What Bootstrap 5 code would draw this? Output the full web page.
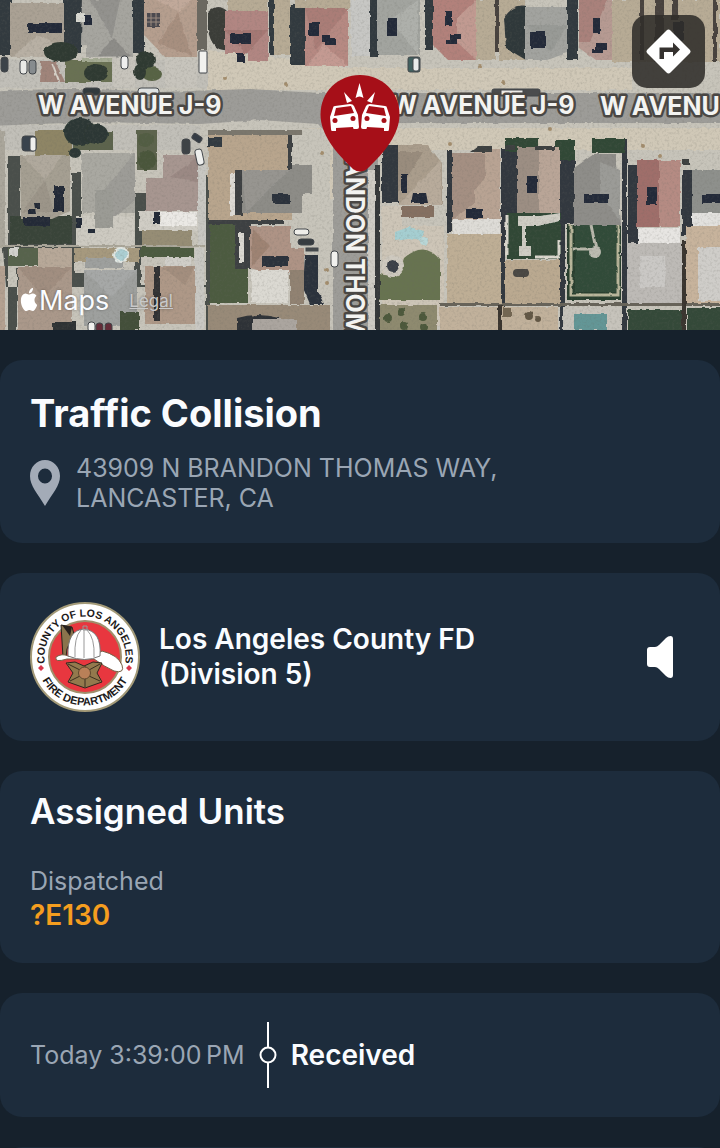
<!DOCTYPE html>
<html lang="en">
<head>
<meta charset="utf-8">
<meta name="viewport" content="width=device-width, initial-scale=1">
<title>Traffic Collision</title>
<link href="https://cdn.jsdelivr.net/npm/bootstrap@5.3.0/dist/css/bootstrap.min.css" rel="stylesheet">
<style>
  body { background: #16212c; color: #fafcff; font-family: Inter, "Liberation Sans", sans-serif; }
  .page { height: 100vh; overflow-x: hidden; overflow-y: auto; scrollbar-width: none; }
  .page::-webkit-scrollbar { display: none; }
  .incident-map { height: 330px; overflow: hidden; background: #bdb8aa; }
  .map-art { width: 100%; height: 100%; display: block; }
  .street { font: 700 25px Inter, sans-serif; fill: #f3f3f1; stroke: #4a4744; stroke-width: 5px; stroke-linejoin: round; paint-order: stroke; }
  .route-btn { top: 15px; right: 15px; width: 73px; height: 73px; border: 0; border-radius: 15px; background: rgba(48, 45, 42, .88); }
  .map-credit { left: 19px; bottom: 13px; gap: 20px; text-shadow: 0 0 3px rgba(0, 0, 0, .4); }
  .brand-name { font-size: 27px; line-height: 32px; }
  .legal-link { font-size: 17px; line-height: 20px; color: #c9c9c9; }
  .stack { display: flex; flex-direction: column; gap: 30px; padding-top: 30px; }
  .panel { background: #1d2c3c; border-radius: 22px; padding: 30px; }
  .title-lg { font-size: 38px; line-height: 47px; font-weight: 700; margin: 0; }
  .title-md { font-size: 35px; line-height: 40px; font-weight: 600; margin: 0; }
  .muted { color: #9aa6b4; font-size: 25px; line-height: 30px; font-weight: 400; }
  .strong-line { font-size: 28px; line-height: 35px; font-weight: 600; margin: 0; }
  .unit-code { color: #f59e1f; }
  .agency { gap: 19px; }
  .seal { width: 110px; height: 110px; margin: -1px 0; }
  .sound-btn { background: none; border: 0; padding: 0; margin-right: 16px; }
  .assigned { padding-top: 20px; }
  .unit-group { display: flex; flex-direction: column; gap: 2px; padding-top: 35px; }
  .timeline { gap: 14px; padding-top: 29px; padding-bottom: 29px; }
</style>
</head>
<body>
<div class="page">
<header class="incident-map position-relative">
  <svg class="map-art" viewBox="0 0 720 330" preserveAspectRatio="xMidYMid slice" role="img" aria-label="Satellite map of the incident">
    <defs>
      <filter id="rough" x="0" y="0" width="100%" height="100%">
        <feTurbulence type="fractalNoise" baseFrequency=".14" numOctaves="2" seed="4" result="n"/>
        <feDisplacementMap in="SourceGraphic" in2="n" scale="3" xChannelSelector="R" yChannelSelector="G" result="d"/>
        <feGaussianBlur in="d" stdDeviation=".6" result="b"/>
        <feColorMatrix in="b" type="saturate" values=".9"/>
      </filter>
      <filter id="grain" x="0" y="0" width="100%" height="100%">
        <feTurbulence type="fractalNoise" baseFrequency=".4" numOctaves="3" seed="9"/>
        <feColorMatrix values="0 0 0 0 .14  0 0 0 0 .14  0 0 0 0 .12  2.4 0 0 0 -1.1"/>
      </filter>
    </defs>
    <g filter="url(#rough)">
      <rect x="-10" y="-10" width="740" height="350" fill="#c7c4b9"/>
      <!-- roads -->
      <path d="M0 60H210V88H0zM0 125H200V150H0z" fill="#c1bfb7"/>
      <path d="M208 50L300 60 350 68H632V90H208zM300 128H720V150H385L330 200V130z" fill="#d1c8b5"/>
      <path d="M-10 92Q60 86 160 92L250 89 320 93H730V123H385L378 135V340H333V140L318 124 260 120 200 124 90 122-10 126z" fill="#9d9c97"/>
      <path d="M368 170h7v170h-7z" fill="#cfccc4"/><path d="M375 165h5v175h-5z" fill="#35373a"/>
      <!-- upper row, yards and shadows -->
      <path d="M-5-5h17v60H-5zM63-5h19v58H63zM133-5h11v58h-11zM370-5h8v62h-8zM425-5h8v55h-8zM567-5h11v65h-11zM290 5h15v60h-15zM269 0h5v55h-5z" fill="#333a40"/>
      <path d="M208 12Q218 2 228 12V50Q212 52 208 30z" fill="#3b3c39"/>
      <path d="M197 0h10v50h-10z" fill="#6c675f"/>
      <path d="M228 0h40v12h-40zM274 0h16v55h-16zM295 0h55v8h-55zM476 0h19v60h-19zM499 0h26v60h-26zM612 0h108v62h-108z" fill="#b8aa92"/>
      <path d="M504 18Q514 3 526 6V60L506 48z" fill="#2f373b"/>
      <path d="M495 0h4v52h-4zM640 0h4v60h-4zM655 0h9v62h-9zM713 0h4v62h-4zM672 0h6v20h-6z" fill="#4a423c"/>
      <path d="M351 0h19v56h-19z" fill="#c7c7c4"/>
      <path d="M10 3h54v54H10z" fill="#aba192"/><path d="M12 57 37 35 64 48V57z" fill="#b9b0a2"/>
      <path d="M82-5h51v62H86V45H81z" fill="#a6a59f"/><path d="M90 0 112 38 120 0z" fill="#93928d"/><path d="M98 56l15-18 18 18z" fill="#8d8c87"/>
      <path d="M144-5h53v62h-32L144 35z" fill="#b79d8b"/><path d="M158 44 178 12 192 56z" fill="#a98e7d"/><path d="M146 -5h50L180 12z" fill="#c3a997"/>
      <path d="M225 11h43v50h-20V53h-23z" fill="#b48580"/><path d="M225 30h43l-22 24z" fill="#a87772"/>
      <path d="M305 8h43v58h-43z" fill="#b98880"/><path d="M305 8h43l-32 42z" fill="#ad7b75"/><path d="M307 66l17-22 24 22z" fill="#c79990"/>
      <path d="M377-5h43v60h-43z" fill="#a2a49f"/><path d="M390 20 418 0v55z" fill="#aeb0aa"/>
      <path d="M433-5h43v65h-28L433 45z" fill="#b68079"/><path d="M457 18 476 0v60l-19-18z" fill="#c4998f"/>
      <path d="M525 7h42v46l-20 7h-22z" fill="#a2a39f"/><path d="M526 25h41l-16 27z" fill="#989a95"/>
      <path d="M579-5h33v65h-16L579 48z" fill="#b89a90"/><path d="M579-5h30L590 42h-11z" fill="#ac8079"/>
      <path d="M28 23h34v10H28zM84 15h8v10h-8zM230 33h21v11h-21zM237 53h8v10h-8zM309 22h10v14h-10zM322 35h8v4h6v6h-10v-3h-4zM387 18h10v18h-10zM445 11h7v15h-7zM446 40h4v-6h11v6h-4v4h-11zM530 32h15v16h-15zM593 18h7v15h-7zM592 49h4v-6h11v7h-4v3h-11zM673 22h11v18h-11z" fill="#23293a"/>
      <path d="M147 13h13v14h-13z" fill="#4c4a50"/>
      <path d="M41 61h14l10 21H40z" fill="#a28378"/><path d="M52 63l7 18" stroke="#d9d2c8" stroke-width="2"/>
      <path d="M65 60h47v22H65z" fill="#69714f"/><path d="M82 58h30v4H82z" fill="#a5ab92"/>
      <path d="M113 57h22v30h-22zM165 58h32v30h-32z" fill="#c7c4bb"/>
      <g fill="#2f3b31"><ellipse cx="61" cy="52" rx="17" ry="10"/><ellipse cx="96" cy="73" rx="12" ry="9"/><ellipse cx="146" cy="60" rx="10" ry="9"/><ellipse cx="152" cy="74" rx="10" ry="7" fill="#56633f"/><ellipse cx="140" cy="72" rx="6" ry="8"/></g>
      <path d="M76 13h9v9h-9z" fill="#d8d8d0"/>
      <!-- lower row, left -->
      <path d="M35 130h37v26H35z" fill="#8f8560"/><path d="M73 132h40v18H73zM137 130h20v40h-20z" fill="#5c6449"/>
      <g fill="#2a3934"><ellipse cx="80" cy="132" rx="16" ry="14"/><ellipse cx="96" cy="134" rx="12" ry="10"/><ellipse cx="75" cy="153" rx="6" ry="5"/><ellipse cx="146" cy="140" rx="8" ry="7" fill="#515d3f"/><ellipse cx="147" cy="160" rx="9" ry="10" fill="#485639"/></g>
      <path d="M-5 150h5v96h8v-90h12v60h52v34H8v80h9v-62h55v-95h9v75h-6v25h60v-80h12v52h-6v40h65v-110h4v200h-4v-88h-200z" fill="#4a4f4b"/>
      <path d="M-5 130h10v115H-5z" fill="#aaa69a"/><path d="M10 216h62v28H10z" fill="#394439"/>
      <path d="M20 155h50v56l-18 8H21z" fill="#a69f91"/><path d="M22 155h40L45 180z" fill="#b1a99b"/><path d="M22 212 45 180 54 212z" fill="#9c9587"/>
      <path d="M82 153h53v60H82z" fill="#a9a8a0"/><path d="M135 153 104 190 98 215 110 222 135 200z" fill="#9d9c96"/><path d="M76 216h58v29H76z" fill="#cdcac0"/><path d="M95 190h18v38h-18z" fill="#9b9b94"/>
      <path d="M163 155h34v25h-34zM146 178h52v34h-52z" fill="#a8958f"/><path d="M170 177 198 157v24z" fill="#9c8883"/>
      <path d="M139 211h60v20h-60z" fill="#d0cdc4"/><path d="M161 212h36v14h-36z" fill="#ebe9e4"/><path d="M142 230h50v16h-50z" fill="#978d72"/>
      <path d="M198 165h8v80h-8z" fill="#c8c7c1"/>
      <path d="M24 217h26v9H24zM54 186h10v26H54zM34 203h6v6h-12v5h8zM76 218h6v10h-6zM88 229h7v4h-7zM153 212h7v12h-7z" fill="#242b38"/>
      <path d="M0 246h205" stroke="#aca799" stroke-width="2"/>
      <path d="M8 248h30v18H8z" fill="#56634a"/><path d="M38 248h34v20H38z" fill="#b8a795"/><path d="M74 248h65v14H74z" fill="#a7997a"/><path d="M140 247h54v10h-54zM210 222h38v81h-38z" fill="#4c5c3c"/>
      <path d="M9 248h9v8H9z" fill="#d2d2cc"/>
      <path d="M-5 266H5v70H-5z" fill="#b5a08f"/>
      <path d="M18 267h54v70H18z" fill="#ac9888"/><path d="M18 267h54L44 298z" fill="#a38e7e"/>
      <path d="M85 258h38v10H85zM84 270h53v56H84z" fill="#9ea09e"/><path d="M84 270h53l-26 28z" fill="#a6a8a7"/>
      <circle cx="121" cy="255" r="8" fill="#e0e6e2"/><circle cx="121" cy="255" r="6" fill="#a9d0d4"/>
      <path d="M145 266h50v58h-50z" fill="#b09884"/><path d="M154 266h6v55h-6z" fill="#333336"/><path d="M165 257h26v9h-26z" fill="#d0cec7"/><path d="M162 267 185 285 195 266z" fill="#a48d7b"/>
      <path d="M195 248h9v82h-9z" fill="#c9c8c3"/><path d="M120 312h19v18h-19z" fill="#425038"/><path d="M52 322h24v12H52z" fill="#2d3334"/>
      <!-- corner lots -->
      <path d="M208 134h84v86h-84z" fill="#b9a48a"/><path d="M288 134h4v40h-4zM235 170h8v45h-8zM208 220h76v4h-76zM235 224h16v45h-16z" fill="#3d4042"/>
      <path d="M208 130h94v5h-94z" fill="#7c776c"/>
      <path d="M208 137h14v10h-14z" fill="#323a42"/>
      <path d="M242 170h50v-5h20v28h-10v20h-60z" fill="#8d8c86"/><path d="M242 170h48l-20 18-24 25z" fill="#979590"/>
      <path d="M230 173h5v42h-5z" fill="#dddad3"/>
      <path d="M250 226h40v22h14v24h-40l-14-4z" fill="#b09382"/><path d="M252 228 270 246 252 266z" fill="#a08271"/>
      <path d="M239 233h5v30h-5zM251 270h37v33h-37z" fill="#dcd9d1"/>
      <path d="M272 194h18v10h-18zM262 256h26v11h-26zM305 255h13v37l6 12h-14l-7-16z" fill="#2c323c"/>
      <path d="M290 270h14v34h-14z" fill="#93826f"/>
      <path d="M208 305h122v30H208z" fill="#9a8a76"/><path d="M237 318q20-6 42 0v15h-42z" fill="#2f3338"/><path d="M252 319h45v12h-45z" fill="#aba59e"/>
      <!-- lower row, right -->
      <path d="M382 145h16v58h-16zM447 150h5v82h-5zM560 140h5v195h-5zM565 160h10v64h-10zM501 148h4v185h-4zM682 170h10v65h-10zM622 140h5v195h-5zM505 146h12v80h-12zM628 165h10v78h-10z" fill="#33393f"/>
      <path d="M505 138h33v14h-33zM555 140h20v20h-20zM592 139h33v14h-33z" fill="#2e4a35"/>
      <path d="M398 145h30l14 18v42h-44z" fill="#ab9d8a"/><path d="M398 205 441 160v45z" fill="#b9ab99"/><path d="M398 152h25l-25 40z" fill="#9a8c7a"/>
      <path d="M402 206h32v11h-32z" fill="#86705f"/><path d="M382 206h20v20h42v100h-62z" fill="#cec5b5"/>
      <path d="M395 232l14-5 15 4-2 10-14-2-13 2z" fill="#a0cfd2"/><circle cx="424" cy="241" r="4" fill="#b6d8d8"/>
      <path d="M404 258Q425 240 440 260V300H380V274Q398 280 404 258z" fill="#66734b"/><circle cx="393" cy="266" r="11" fill="#cfc9be"/><circle cx="393" cy="266" r="6" fill="#3b4149"/>
      <path d="M380 305h57v30h-57z" fill="#8f8a6c"/>
      <g fill="#4b5937"><circle cx="388" cy="318" r="4"/><circle cx="401" cy="312" r="4"/><circle cx="404" cy="326" r="4"/><circle cx="423" cy="317" r="4"/><circle cx="424" cy="327" r="4"/></g>
      <path d="M452 153h22v-4h26v71h-48z" fill="#baa391"/><path d="M452 153h33v25l-10 12v13l-23 17z" fill="#a68f80"/><path d="M453 219h47v15h-47z" fill="#dedcd7"/><path d="M447 234h54v70h-54z" fill="#bfae92"/>
      <path d="M517 147h43v67h-43z" fill="#bba594"/><path d="M517 147h22v66h-22z" fill="#9d8e81"/>
      <path d="M507 213h54v46h-54z" fill="#2e4a36"/><path d="M518 216h22l20-3v8l-22 5h-20zM522 226h4v20h-4zM519 246h12v10h-12z" fill="#cfcdc3"/><path d="M505 260h55v44h-55z" fill="#bba98c"/><rect x="513" y="269" width="16" height="8" rx="4" fill="#484642"/>
      <path d="M507 215v40M559 240v17h-24" stroke="#dcd8cd" stroke-width="3" fill="none"/>
      <path d="M574 168l20-14h22v10l5 61h-47z" fill="#8e8d88"/><path d="M600 162 620 170V220L600 195z" fill="#9b9b96"/><path d="M567 225h54v75h-54z" fill="#26402d"/><path d="M571 225v70h47V225" fill="none" stroke="#b9b698" stroke-width="3"/><path d="M575 225h41v67h-41z" fill="#2e4c37"/>
      <path d="M591 225l5 24M573 249h22" stroke="#b9b8ab" stroke-width="3"/><circle cx="595" cy="252" r="6" fill="#bcbbb0"/>
      <path d="M637 160h43v67h-43z" fill="#b88a81"/><path d="M637 160h22v67h-22z" fill="#a26d68"/><path d="M638 228h42v15h-42z" fill="#e7e5e2"/><path d="M627 243h55v61h-55z" fill="#bdbab5"/><path d="M640 256h25v31h-25z" fill="#cac8c5"/>
      <path d="M692 170h33v43h-33z" fill="#8e908c"/><path d="M692 213h33v13h-33z" fill="#e2e1de"/><path d="M686 226h39v78h-39z" fill="#c9b399"/><path d="M698 247h27v54h-27z" fill="#cfcdc9"/>
      <path d="M401 174h6v19h-6zM413 193h13l2 10h-17zM466 209h17v9h-17zM527 176h10v17h-10zM584 194h25v9h-25zM647 187h10v18h-10zM702 194h23v9h-23z" fill="#23293a"/>
      <path d="M440 303h280v3H440z" fill="#686359"/>
      <path d="M440 307h58v28h-58zM502 307h56v28h-56z" fill="#c2b198"/><circle cx="529" cy="316" r="4" fill="#635642"/><circle cx="538" cy="319" r="3" fill="#635642"/><path d="M503 308h8v9h-8z" fill="#756650"/>
      <path d="M563 307h58v28h-58z" fill="#c6c3ba"/><path d="M574 314h33v16h-33z" fill="#5d9797"/><path d="M628 310h54v25h-54zM687 308h38v27h-38z" fill="#334a39"/><path d="M498 305h4v30h-4zM682 240h4v95h-4z" fill="#3a342f"/>
      <path d="M515 150h-10v-5h10zM470 152h22v-6h-14zM535 150h20v-4h-20zM682 165h8v-6h-8z" fill="#3d3f40"/>
      <g fill="#a68d68"><circle cx="225" cy="78" r="2"/><circle cx="286" cy="84" r="2"/><circle cx="322" cy="153" r="2"/><circle cx="480" cy="66" r="2"/><circle cx="503" cy="82" r="2"/><circle cx="550" cy="129" r="2"/><circle cx="450" cy="144" r="2"/><circle cx="643" cy="146" r="2"/><circle cx="660" cy="156" r="2"/><circle cx="327" cy="270" r="2"/><circle cx="327" cy="283" r="2"/></g>
    </g>
    <rect width="720" height="330" filter="url(#grain)" opacity=".2"/>
    <!-- parked cars -->
    <g stroke="#42464a" stroke-width="1">
      <rect x="1" y="57" width="7" height="15" rx="3" fill="#3c4349"/><rect x="20" y="60" width="7" height="14" rx="3" fill="#e9e9e6"/><rect x="29" y="60" width="7" height="14" rx="3" fill="#868b8e"/><rect x="121" y="56" width="7" height="13" rx="3" fill="#efefee"/>
      <rect x="199" y="51" width="8" height="22" rx="1" fill="#f2f2ef"/><rect x="83" y="88" width="17" height="7" rx="3" fill="#323a3d"/><rect x="138" y="88" width="21" height="7" rx="3" fill="#dfe2e2"/>
      <rect x="492" y="89" width="48" height="7" rx="2" fill="#4b4c4d"/><rect x="501" y="90" width="22" height="5" fill="#ecebe8"/>
      <rect x="408" y="57" width="12" height="15" rx="2" fill="#41605f"/><rect x="413" y="58" width="6" height="13" rx="2" fill="#e8eceb"/>
      <rect x="22" y="136" width="14" height="15" rx="3" fill="#39434d"/><rect x="30" y="137" width="6" height="14" rx="2" fill="#eeeeec"/><rect x="182" y="139" width="8" height="15" rx="3" fill="#3e4346"/><rect x="196" y="149" width="7" height="16" rx="3" fill="#eeefed" transform="rotate(-12 200 157)"/><rect x="192" y="135" width="10" height="6" rx="2" fill="#353c45" transform="rotate(35 197 138)"/>
      <rect x="294" y="229" width="15" height="6" rx="3" fill="#efeeea"/><rect x="298" y="239" width="16" height="6" rx="3" fill="#373c40"/><rect x="331" y="251" width="7" height="16" rx="3" fill="#f1f1ee"/><rect x="306" y="248" width="12" height="3" fill="#474b4c"/>
      <rect x="88" y="322" width="7" height="10" rx="3" fill="#f0f0ed"/><rect x="96" y="323" width="7" height="10" rx="3" fill="#632c38"/><rect x="105" y="323" width="7" height="10" rx="3" fill="#632c38"/>
    </g>
    <path d="M147 18h13M147 22h13M151 13v13M156 13v13" stroke="#9b8b80"/>
    <text class="street" x="38" y="114">W AVENUE J-9</text>
    <text class="street" x="391" y="114">W AVENUE J-9</text>
    <text class="street" x="600" y="115">W AVENU</text>
    <text class="street" transform="translate(346 158) rotate(90)">ANDON THOM</text>
    <!-- incident pin -->
    <path d="M360 75C382 75 399.500 92 399.500 114.500 399.500 134 385 152 367 169Q360 174 353 169C335 152 320.500 134 320.500 114.500 320.500 92 338 75 360 75z" fill="#a60f18"/>
    <path d="M359.500 83l4 15q-4-3-8 0zM344 92l8 9-5 2zM375 92l-3 11-5-2z" fill="#fff"/>
    <g fill="#fff" fill-rule="evenodd">
      <path d="M335 106 350 104Q353 104 354 106L358 115 359 127Q359 129 357 129H354Q353 129 353 127L336 128V131H332Q331 131 331 129L330 117 333 108Q333 106 335 106zM336 108 334 116 354 113 351 106z"/>
      <path d="M385 106 370 104Q367 104 366 106L362 115 361 127Q361 129 363 129H366Q367 129 367 127L384 128V131H388Q389 131 389 129L390 117 387 108Q387 106 385 106zM384 108 386 116 366 113 369 106z"/>
    </g>
    <g fill="#a60f18"><circle cx="335" cy="120.500" r="2.500"/><circle cx="353" cy="118.500" r="2.500"/><circle cx="367" cy="118.500" r="2.500"/><circle cx="384" cy="120.500" r="2.500"/></g>
  </svg>
  <button type="button" class="route-btn position-absolute d-flex align-items-center justify-content-center p-0" aria-label="Directions">
    <svg width="45" height="45" viewBox="0 0 45 45" aria-hidden="true"><path d="M20.500 1.500Q22.500-.5 24.500 1.500L43.500 20.500Q45.500 22.500 43.500 24.500L24.500 43.500Q22.500 45.500 20.500 43.500L1.500 24.500Q-.5 22.500 1.500 20.500z" fill="#fff"/><path d="M13.500 30V18.500H27V13.500L34 20.500 27 27.500V23H18V30z" fill="#35322f"/></svg>
  </button>
  <div class="map-credit position-absolute d-flex align-items-center">
    <span class="d-flex align-items-center brand-name"><svg class="mb-1" width="20" height="23" viewBox="0 0 16 16" preserveAspectRatio="none" fill="#fff" aria-hidden="true"><path d="M11.182.008C11.148-.03 9.923.023 8.857 1.180c-1.066 1.156-.902 2.482-.878 2.516s1.520.087 2.475-1.258.762-2.391.728-2.430m3.314 11.733c-.048-.096-2.325-1.234-2.113-3.422s1.675-2.789 1.698-2.854-.597-.790-1.254-1.157a3.700 3.700 0 0 0-1.563-.434c-.108-.003-.483-.095-1.254.116-.508.139-1.653.589-1.968.607-.316.018-1.256-.522-2.267-.665-.647-.125-1.333.131-1.824.328-.490.196-1.422.754-2.074 2.237-.652 1.482-.311 3.830-.067 4.560s.625 1.924 1.273 2.796c.576.984 1.340 1.667 1.659 1.899s1.219.386 1.843.067c.502-.308 1.408-.485 1.766-.472.357.013 1.061.154 1.782.539.571.197 1.111.115 1.652-.105.541-.221 1.324-1.059 2.238-2.758q.520-1.185.473-1.282"/></svg>Maps</span>
    <a href="#" class="legal-link">Legal</a>
  </div>
</header>

<main class="stack">
  <section class="panel">
    <h1 class="title-lg">Traffic Collision</h1>
    <div class="d-flex align-items-center gap-3 mt-3">
      <svg class="flex-shrink-0" width="30" height="46" viewBox="0 0 32 46" preserveAspectRatio="none" aria-hidden="true"><path fill="#a3abb7" fill-rule="evenodd" d="M16 0C25 0 32 7 32 16 32 26 24 33 16 46 8 33 0 26 0 16 0 7 7 0 16 0zM16 8.500a7.500 7.500 0 1 0 0 15 7.500 7.500 0 0 0 0-15z"/></svg>
      <address class="muted m-0">43909 N BRANDON THOMAS WAY,<br>LANCASTER, CA</address>
    </div>
  </section>

  <section class="panel agency d-flex align-items-center">
    <svg class="seal flex-shrink-0" viewBox="0 0 110 110" role="img" aria-label="County of Los Angeles Fire Department seal">
      <defs><path id="arcTop" d="M19.930 75.250a40.500 40.500 0 1 1 70.140 0"/><path id="arcBottom" d="M6.500 55a48.500 48.500 0 0 0 97 0"/></defs>
      <circle cx="55" cy="55" r="54" fill="#fff" stroke="#a39a78" stroke-width="2"/>
      <circle cx="55" cy="55" r="36" fill="#e8373f" stroke="#a08e6b" stroke-width="2"/>
      <g font-family="Liberation Sans, sans-serif" font-weight="700" font-size="11" fill="#1c1a1a" text-anchor="middle">
        <text font-size="10.500"><textPath href="#arcTop" startOffset="50%">COUNTY OF LOS ANGELES</textPath></text>
        <text><textPath href="#arcBottom" startOffset="50%">FIRE DEPARTMENT</textPath></text>
      </g>
      <path d="M11 63l3 3-3 3-3-3zM99 63l3 3-3 3-3-3z" fill="#d8354a"/>
      <path d="M31 23 42 25 44 32 37 47 36 55 33 55z" fill="#8a744c" stroke="#2c241c"/><path d="M32 23 42 25 40 34z" fill="#27211d"/>
      <path d="M26 55Q32 51 38 54 58 60 72 49 88 53 92 63 95 72 84 69 75 65 64 57L37 57Q24 61 26 55z" fill="#fff" stroke="#775f45"/>
      <path d="M38 54Q37 28 54 27 72 29 70 54 55 61 38 54z" fill="#fff" stroke="#777"/>
      <path d="M45 55Q44 35 51 28M54 56V28M64 55Q65 36 57 28M53 24h4v4h-4z" fill="none" stroke="#999"/>
      <path d="M36 61 45 60 54 64 63 60 72 61 67 71 72 80 55 86 38 80 43 71z" fill="#93794d" stroke="#30271d"/>
      <path d="M38 62 50 68M70 62 59 68M40 79 50 74M70 79 59 74M55 64v4M55 76v9" stroke="#3b2f20" fill="none"/><circle cx="54.500" cy="71" r="6" fill="#b98058" stroke="#5f482e"/>
    </svg>
    <h2 class="strong-line flex-grow-1">Los Angeles County FD<br>(Division 5)</h2>
    <button type="button" class="sound-btn" aria-label="Play audio">
      <svg class="d-block" width="28" height="42" viewBox="0 0 28 42" aria-hidden="true"><path d="M4 11H9Q11 11 13 9L20 2Q22 0 24.500 0 27 0 27 3V39Q27 42 24.500 42 22 42 20 40L13 33Q11 31 9 31H4Q1 31 1 28V14Q1 11 4 11z" fill="#fff"/></svg>
    </button>
  </section>

  <section class="panel assigned">
    <h2 class="title-md">Assigned Units</h2>
    <div class="unit-group">
      <p class="muted m-0">Dispatched</p>
      <p class="strong-line unit-code">?E130</p>
    </div>
  </section>

  <section class="panel timeline d-flex align-items-center">
    <time class="muted">Today 3:39:00&#8239;PM</time>
    <svg class="flex-shrink-0" width="18" height="66" viewBox="0 0 18 66" fill="none" stroke="#fff" stroke-width="2" aria-hidden="true"><path d="M9 0V25M9 41V66"/><circle cx="9" cy="33" r="7.500"/></svg>
    <h3 class="strong-line">Received</h3>
  </section>

  <section class="panel" aria-label="More details"></section>
</main>
</div>
<script src="https://cdn.jsdelivr.net/npm/bootstrap@5.3.0/dist/js/bootstrap.bundle.min.js"></script>
</body>
</html>
